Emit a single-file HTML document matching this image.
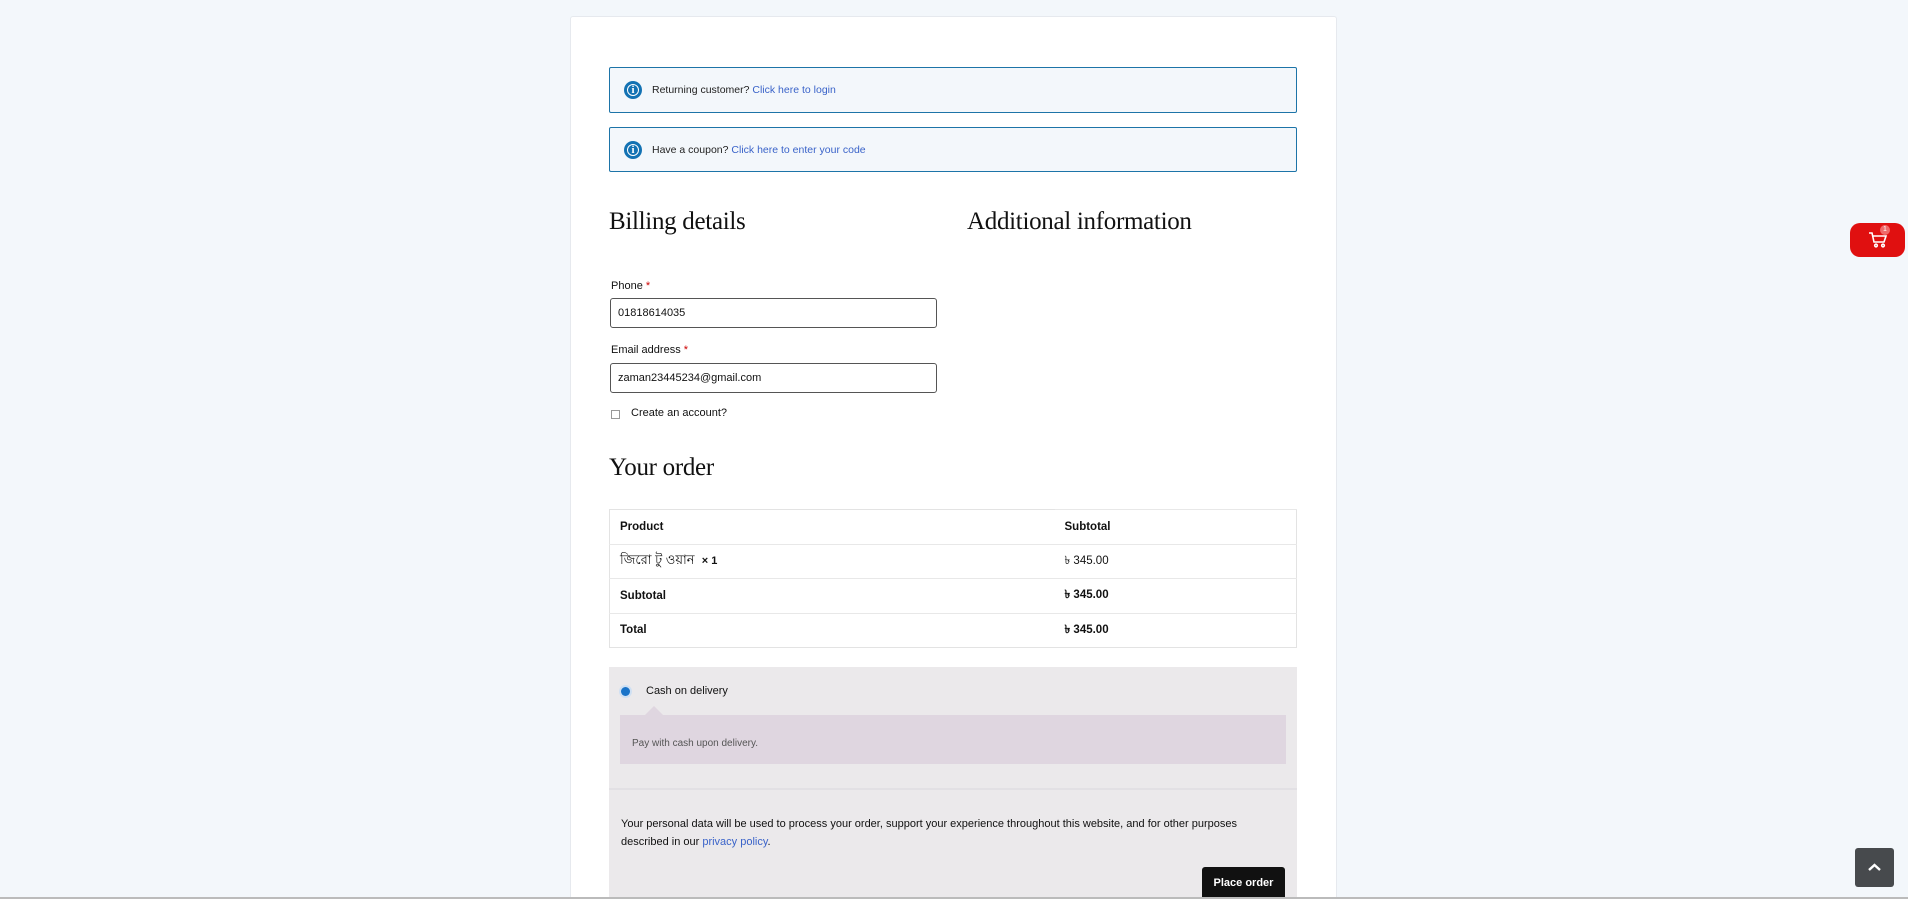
<!DOCTYPE html>
<html style="overflow:hidden;height:899px"><head><meta charset="utf-8"><style>
*{box-sizing:border-box;margin:0;padding:0}
body{width:1908px;height:899px;overflow:hidden;background:#f3f7fb;font-family:"Liberation Sans",sans-serif;color:#111;position:relative;font-size:12px}
.card{position:absolute;left:570px;top:16px;width:767px;height:883px;background:#fff;border:1px solid #e6e9ee;border-bottom:0;border-radius:3px 3px 0 0}
.abs{position:absolute}
.notice{position:absolute;left:609px;width:688px;border:1px solid #1d74a8;background:#f3f7fb;border-radius:2px;font-size:10.5px;color:#222}
.notice .ic{position:absolute;left:14px;top:50%;margin-top:-9px;width:18px;height:18px;border-radius:50%;background:#1372b3;color:#fff;text-align:center;font:bold 11px/18px "Liberation Serif",serif}
.notice .ic:after{content:"";position:absolute;left:3px;top:3px;width:10px;height:10px;border:1px solid #fff;border-radius:50%}
.notice span.t{position:absolute;left:42px;top:50%;transform:translateY(-50%)}
a{color:#3a63c9;text-decoration:none}
h2{position:absolute;font-family:"Liberation Serif",serif;font-weight:normal;font-size:25px;color:#111;letter-spacing:-0.3px}
label{position:absolute;font-size:11px}
.req{color:#c00}
.inp{position:absolute;left:610px;width:327px;height:30px;border:1px solid #555;border-radius:3px;font-size:11px;padding:0 7px;line-height:28px}
table{position:absolute;left:609px;top:509px;width:688px;border-collapse:collapse;border:1px solid #e3e3e3;font-size:11.5px}
td{height:34.5px;padding:0 10px;border-top:1px solid #e8e8e8}
td.c2{width:242px}
b{font-weight:bold}
.pay{position:absolute;left:609px;top:667px;width:688px;height:232px;background:#ebe9eb}
</style></head><body>
<div class="card"></div>
<div class="notice" style="top:67px;height:46px"><div class="ic">i</div><span class="t">Returning customer? <a>Click here to login</a></span></div>
<div class="notice" style="top:127px;height:45px"><div class="ic">i</div><span class="t">Have a coupon? <a>Click here to enter your code</a></span></div>
<h2 style="left:609px;top:208px">Billing details</h2>
<h2 style="left:967px;top:208px">Additional information</h2>
<label style="left:611px;top:280px">Phone <span class="req">*</span></label>
<div class="inp" style="top:298px">01818614035</div>
<label style="left:611px;top:344px">Email address <span class="req">*</span></label>
<div class="inp" style="top:363px">zaman23445234@gmail.com</div>
<div class="abs" style="left:611px;top:410px;width:9px;height:9px;border:1px solid #999"></div>
<div class="abs" style="left:631px;top:407px;font-size:11px">Create an account?</div>
<h2 style="left:609px;top:454px">Your order</h2>
<table>
<tr><td style="border-top:0"><b>Product</b></td><td class="c2"><b>Subtotal</b></td></tr>
<tr><td style="font-family:'Liberation Sans','Noto Sans CJK SC',sans-serif;font-size:13px">জিরো টু ওয়ান &nbsp;<b style="font-size:11px">× 1</b></td><td class="c2">৳ 345.00</td></tr>
<tr><td><b>Subtotal</b></td><td class="c2"><b>৳ 345.00</b></td></tr>
<tr><td><b>Total</b></td><td class="c2"><b>৳ 345.00</b></td></tr>
</table>
<div class="pay"></div>
<div class="abs" style="left:621px;top:687px;width:9px;height:9px;border-radius:50%;background:#1a73c8;box-shadow:0 0 0 2px #cfe0f3"></div>
<div class="abs" style="left:646px;top:685px;font-size:11px">Cash on delivery</div>
<div class="abs" style="left:620px;top:715px;width:666px;height:49px;background:#dfd6e0"></div>
<div class="abs" style="left:645px;top:706px;width:0;height:0;border:9px solid transparent;border-bottom-color:#dfd6e0;border-top:0"></div>
<div class="abs" style="left:632px;top:738px;font-size:10px;color:#555">Pay with cash upon delivery.</div>
<div class="abs" style="left:609px;top:788px;width:688px;height:2px;background:#e2e0e4"></div>
<div class="abs" style="left:621px;top:815px;font-size:11px;line-height:18px;width:640px">Your personal data will be used to process your order, support your experience throughout this website, and for other purposes described in our <a>privacy policy</a>.</div>
<div class="abs" style="left:1202px;top:867px;width:83px;height:34px;background:#111;border-radius:3px;color:#fff;font-weight:bold;font-size:11px;text-align:center;line-height:32px">Place order</div>
<div class="abs" style="left:0;top:897px;width:1908px;height:2px;background:#bbb"></div>
<div class="abs" style="left:1850px;top:223px;width:55px;height:34px;background:#e01010;border-radius:10px"></div>
<svg class="abs" style="left:1868px;top:231px" width="20" height="18" viewBox="0 0 20 18" fill="none" stroke="#fff" stroke-width="1.6"><path d="M1 2h3l2 9h10l2-6H5"/><circle cx="8" cy="14.5" r="1.3"/><circle cx="15" cy="14.5" r="1.3"/></svg>
<div class="abs" style="left:1880px;top:225px;width:10px;height:10px;border-radius:50%;background:#f06a6a;color:#fff;font-size:7px;text-align:center;line-height:10px">1</div>
<div class="abs" style="left:1855px;top:848px;width:39px;height:39px;background:#474a4d;border-radius:3px"></div>
<svg class="abs" style="left:1866px;top:860px" width="17" height="14" viewBox="0 0 17 14"><path d="M3 10l5.5-5 5.5 5" stroke="#fff" stroke-width="2.4" fill="none"/></svg>
</body></html>
